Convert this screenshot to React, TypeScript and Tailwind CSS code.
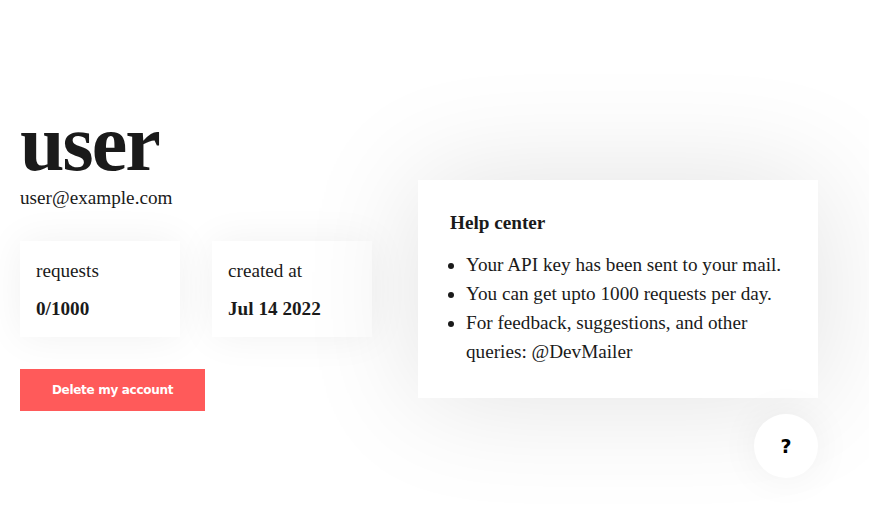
import React from "react";

const serif = { fontFamily: '"Liberation Serif", "Times New Roman", serif' };

function StatCard({ label, value }: { label: string; value: string }) {
  return (
    <div className="w-[160px] h-[96px] bg-white pl-[16px] pt-[18px] shadow-[0_0_40px_rgba(0,0,0,0.06)]">
      <div className="text-[19.2px] leading-[24px] text-[#1a1a1a]">{label}</div>
      <div className="mt-[14px] text-[19.2px] leading-[24px] font-bold text-[#1a1a1a]">{value}</div>
    </div>
  );
}

export default function App() {
  return (
    <div className="relative w-full h-[508px] bg-white overflow-hidden" style={serif}>
      <div className="flex items-start">
        <div className="w-[418px] pl-[20px] pt-[103px] flex flex-col">
          <h1 className="text-[80px] leading-[80px] font-bold text-[#1a1a1a] tracking-[-2px]">user</h1>
          <div className="mt-[3px] text-[19.2px] leading-[24px] text-[#1a1a1a]">user@example.com</div>
          <div className="mt-[31px] flex gap-[32px]">
            <StatCard label="requests" value="0/1000" />
            <StatCard label="created at" value="Jul 14 2022" />
          </div>
          <button
            className="mt-[32px] w-[185px] h-[42px] bg-[#ff5a5a] text-white text-[12px] font-bold tracking-[-0.3px]"
            style={{ fontFamily: '"DejaVu Sans", Verdana, sans-serif' }}
          >
            Delete my account
          </button>
        </div>
        <div className="mt-[180px] w-[400px] h-[218px] bg-white pl-[32px] pr-[32px] pt-[31px] shadow-[0_0_120px_rgba(0,0,0,0.12)]">
          <div className="text-[19.2px] leading-[24px] font-bold text-[#1a1a1a]">Help center</div>
          <ul className="mt-[15px] list-disc pl-[16px] text-[19.2px] leading-[29px] text-[#1a1a1a]">
            <li>Your API key has been sent to your mail.</li>
            <li>You can get upto 1000 requests per day.</li>
            <li>For feedback, suggestions, and other queries: @DevMailer</li>
          </ul>
        </div>
      </div>
      <div
        className="absolute left-[754px] top-[414px] w-[64px] h-[64px] rounded-full bg-white flex items-center justify-center text-[19px] font-bold text-black shadow-[0_0_40px_rgba(0,0,0,0.06)]"
        style={{ fontFamily: '"DejaVu Sans", Verdana, sans-serif' }}
      >
        ?
      </div>
    </div>
  );
}
